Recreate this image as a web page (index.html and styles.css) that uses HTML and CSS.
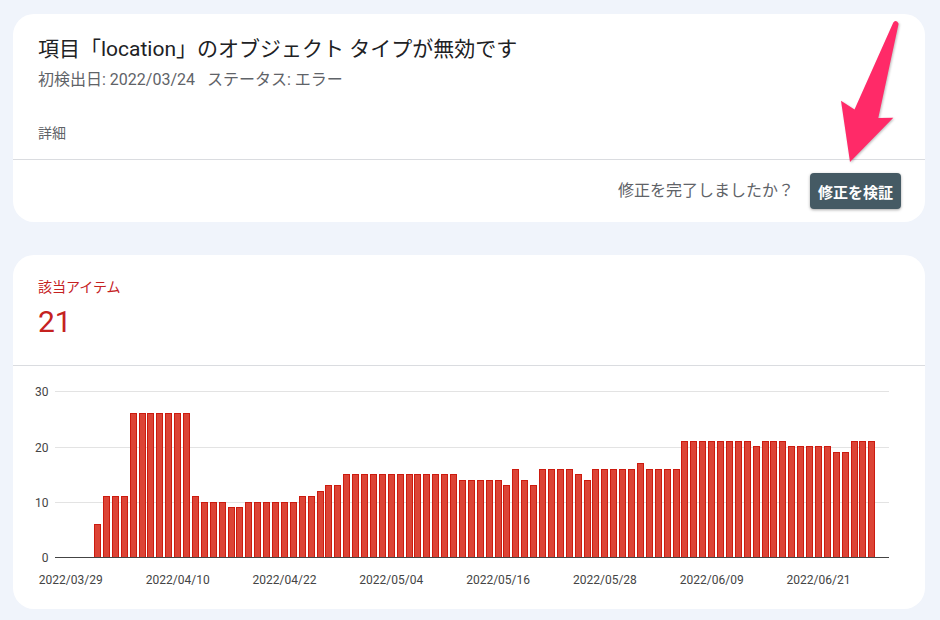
FILE: index.html
```html
<!DOCTYPE html>
<html lang="ja">
<head>
<meta charset="utf-8">
<title>項目「location」のオブジェクト タイプが無効です</title>
<link rel="stylesheet" href="styles.css">
<script src="script.js" defer></script>
</head>
<body>
<main class="page">
  <section class="card issue">
    <div class="issue-head">
      <h1 class="issue-title">項目「location」のオブジェクト タイプが無効です</h1>
      <p class="issue-meta"><span>初検出日: 2022/03/24</span><span class="meta-status">ステータス: エラー</span></p>
      <p class="issue-detail">詳細</p>
    </div>
    <div class="issue-foot">
      <span class="foot-question">修正を完了しましたか？</span>
      <button class="btn-validate" type="button">修正を検証</button>
    </div>
    <svg class="callout-arrow" width="912" height="209" viewBox="0 0 912 209" aria-hidden="true">
      <path d="M880.3 8.5 Q883.6 5.2 885.6 9.8 L865.3 104 L880.3 103.7 L837 148 L828 86.7 L841.5 95.5 Z"/>
    </svg>
  </section>

  <section class="card items">
    <div class="items-head">
      <div class="items-label">該当アイテム</div>
      <div class="items-count">21</div>
    </div>
    <svg class="chart" width="912" height="243" viewBox="0 0 912 243">
      <g class="grid">
        <line x1="42" y1="25.5" x2="876" y2="25.5"/>
        <line x1="42" y1="81.5" x2="876" y2="81.5"/>
        <line x1="42" y1="136.5" x2="876" y2="136.5"/>
      </g>
      <g class="y-labels">
        <text x="35.5" y="30">30</text>
        <text x="35.5" y="86">20</text>
        <text x="35.5" y="141">10</text>
        <text x="35.5" y="196">0</text>
      </g>
      <g id="bars" class="bars"></g>
      <line class="baseline" x1="42" y1="191.5" x2="876" y2="191.5"/>
      <g class="x-labels">
        <text x="57.7" y="218">2022/03/29</text>
        <text x="164.7" y="218">2022/04/10</text>
        <text x="271.5" y="218">2022/04/22</text>
        <text x="378.3" y="218">2022/05/04</text>
        <text x="485.1" y="218">2022/05/16</text>
        <text x="591.9" y="218">2022/05/28</text>
        <text x="698.7" y="218">2022/06/09</text>
        <text x="805.5" y="218">2022/06/21</text>
      </g>
    </svg>
  </section>
</main>
</body>
</html>
```

FILE: styles.css
```css
* { box-sizing: border-box; }

body {
  margin: 0;
  background: #f0f4fb;
  font-family: Roboto, "Noto Sans CJK JP", sans-serif;
  color: #202124;
}

.page {
  display: flex;
  flex-direction: column;
  gap: 33px;
  padding: 14px 15px 0 13px;
}

.card {
  position: relative;
  width: 912px;
  background: #fff;
  border-radius: 21px;
}

/* ---------- issue card ---------- */
.issue-head {
  padding: 21px 24px 16px 25px;
  border-bottom: 1px solid #dadce0;
}

.issue-title {
  margin: 0;
  font-size: 21px;
  line-height: 28px;
  font-weight: 400;
  color: #202124;
}

.issue-meta {
  margin: 5px 0 0;
  font-size: 16px;
  line-height: 24px;
  color: #5f6368;
}

.meta-status { margin-left: 12px; }

.issue-detail {
  margin: 31px 0 0;
  font-size: 14px;
  line-height: 20px;
  color: #5f6368;
}

.issue-foot {
  display: flex;
  align-items: center;
  justify-content: flex-end;
  gap: 16px;
  padding: 13px 24px 13px 25px;
}

.foot-question {
  font-size: 16px;
  line-height: 24px;
  color: #5f6368;
}

.btn-validate {
  height: 36px;
  padding: 0 8px;
  border: 0;
  border-radius: 4px;
  background: #455a64;
  color: #fff;
  font-family: Roboto, "Noto Sans CJK JP", sans-serif;
  font-size: 15px;
  font-weight: 700;
  box-shadow: 0 1px 3px rgba(0, 0, 0, 0.35);
}

.callout-arrow {
  position: absolute;
  left: 0;
  top: 0;
  pointer-events: none;
  overflow: visible;
}

.callout-arrow path {
  fill: #ff2a68;
  filter: drop-shadow(1px 1px 1px rgba(0, 0, 0, 0.25));
}

/* ---------- items card ---------- */
.items-head {
  padding: 22px 24px 23px 25px;
  border-bottom: 1px solid #dadce0;
}

.items-label {
  font-size: 14px;
  line-height: 20px;
  color: #c5221f;
}

.items-count {
  margin-top: 5px;
  font-size: 30px;
  line-height: 40px;
  color: #c5221f;
}

.chart {
  display: block;
  font-family: Roboto, sans-serif;
}

.grid line {
  stroke: #e3e3e3;
  stroke-width: 1;
}

.baseline {
  stroke: #444;
  stroke-width: 1;
}

.y-labels text {
  font-size: 12px;
  fill: #444;
  text-anchor: end;
}

.x-labels text {
  font-size: 12px;
  fill: #444;
  text-anchor: middle;
}

.bars rect {
  fill: #dc4436;
  stroke: #cc1b0f;
  stroke-width: 1;
}
```

FILE: script.js
```js
(function () {
  var values = [
    6, 11, 11, 11, 26, 26, 26, 26, 26, 26, 26, 11, 10, 10, 10, 9, 9,
    10, 10, 10, 10, 10, 10, 11, 11, 12, 13, 13,
    15, 15, 15, 15, 15, 15, 15, 15, 15, 15, 15, 15, 15,
    14, 14, 14, 14, 14, 13, 16, 14, 13, 16, 16, 16, 16, 15, 14,
    16, 16, 16, 16, 16, 17, 16, 16, 16, 16,
    21, 21, 21, 21, 21, 21, 21, 21, 20, 21, 21, 21,
    20, 20, 20, 20, 20, 19, 19, 21, 21, 21
  ];
  var ns = "http://www.w3.org/2000/svg";
  var g = document.getElementById("bars");
  var base = 191;
  var unit = 5.53;
  values.forEach(function (v, i) {
    var x = Math.round(81 + i * 8.9);
    var h = Math.round(v * unit);
    var r = document.createElementNS(ns, "rect");
    r.setAttribute("x", x + 0.5);
    r.setAttribute("y", base - h + 0.5);
    r.setAttribute("width", 6);
    r.setAttribute("height", h);
    g.appendChild(r);
  });
})();
```
